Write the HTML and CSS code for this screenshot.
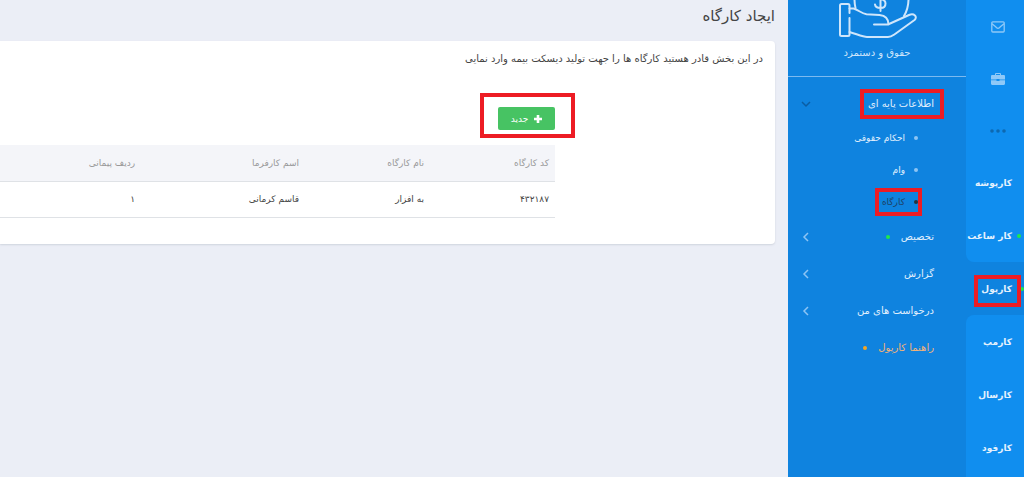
FILE: index.html
```html
<!doctype html>
<html lang="fa" dir="rtl">

	<head>
		<meta charset="UTF-8">
		<meta name="viewport" content="width=device-width, initial-scale=1">
		<title>ایجاد کارگاه</title>
		<link rel="stylesheet" href="styles.css">
	</head>

	<body>
		<nav class="rail">
			<div class="rail-group rail-top">
				<a class="rail-icon" href="#" aria-label="پیام ها">
					<svg width="14" height="12" viewBox="0 0 14 12" fill="none" stroke="currentColor" stroke-width="1.3">
						<rect x="0.8" y="0.8" width="12.4" height="10.2" rx="1" />
						<path d="M1 2.8c2 1.7 3.6 3 4.6 3.9.9.7 1.9.7 2.8 0 1-.9 2.6-2.2 4.6-3.9" />
					</svg>
				</a>
				<a class="rail-icon" href="#" aria-label="کیف">
					<svg width="14" height="12" viewBox="0 0 14 12" fill="currentColor">
						<path d="M4 2V1.2C4 .5 4.5 0 5.2 0h3.6C9.500 0 10 .5 10 1.2V2h2.800C13.500 2 14 2.500 14 3.200V6.500H8.500V6h-3v.5H0V3.200C0 2.500.5 2 1.200 2zM5 2h4V1H5zM0 7.200h5.500V8h3v-.8H14v3.600c0 .7-.5 1.200-1.200 1.200H1.200C.5 12 0 11.500 0 10.800z" />
					</svg>
				</a>
				<a class="rail-icon rail-more" href="#" aria-label="بیشتر">
					<svg width="16" height="4" viewBox="0 0 16 4" fill="currentColor">
						<circle cx="2" cy="2" r="1.8" />
						<circle cx="8" cy="2" r="1.8" />
						<circle cx="14" cy="2" r="1.8" />
					</svg>
				</a>
				<a class="rail-link" href="#">کارپوشه</a>
				<a class="rail-link has-dot" href="#">کار ساعت</a>
			</div>
			<a class="rail-link has-dot active" href="#"><span class="mark mark-rail">کارپول</span></a>
			<div class="rail-group rail-bottom">
				<a class="rail-link" href="#">کارمپ</a>
				<a class="rail-link" href="#">کارسال</a>
				<a class="rail-link" href="#">کارفود</a>
			</div>
		</nav>

		<aside class="sidebar">
			<div class="module">
				<svg width="80" height="40" viewBox="0 0 80 40" fill="none" stroke="currentColor" stroke-width="2" stroke-linecap="round" stroke-linejoin="round">
					<path d="M12.500 13V5.500c0-1-.5-1.500-1.500-1.500H4.500C3.500 4 3 4.500 3 5.500V34.500c0 1 .5 1.500 1.500 1.500H11c1 0 1.500-.5 1.500-1.500V18" />
					<path d="M12.500 8.500h4c5 1.500 8 5 13 5.700l13 .8c5 .5 9 3 9 9.500H37" />
					<path d="M52 24l20-9c5-2 9 1.500 5.500 5L57 34.700c-2 1.500-3 2.300-6 2.300H30c-4 0-11-3.200-17.500-5" />
					<path d="M17.500-1c0 3 .2 6 1 9M71.500-1c0 7-1.500 12-4.500 17" />
					<path d="M38 4.500c.5 3 2.500 3.500 5.500 3.500s5-1.500 5-4.500-2-4-5-4.500M43.500-1v12" />
				</svg>
				<div class="module-name">حقوق و دستمزد</div>
			</div>
			<ul class="menu">
				<li>
					<a class="menu-link open" href="#"><span class="mark mark-group">اطلاعات پایه ای</span>
						<svg class="arrow" width="10" height="10" viewBox="0 0 10 10" fill="none" stroke="currentColor" stroke-width="1.5"><path d="M1 3l4 4 4-4" /></svg>
					</a>
					<ul class="submenu">
						<li><a href="#">احکام حقوقی</a></li>
						<li><a href="#">وام</a></li>
						<li><a class="current mark mark-sub" href="#">کارگاه</a></li>
					</ul>
				</li>
				<li>
					<a class="menu-link" href="#">تخصیص<i class="dot green"></i>
						<svg class="arrow" width="10" height="10" viewBox="0 0 10 10" fill="none" stroke="currentColor" stroke-width="1.5"><path d="M7 1L3 5l4 4" /></svg>
					</a>
				</li>
				<li>
					<a class="menu-link" href="#">گزارش
						<svg class="arrow" width="10" height="10" viewBox="0 0 10 10" fill="none" stroke="currentColor" stroke-width="1.5"><path d="M7 1L3 5l4 4" /></svg>
					</a>
				</li>
				<li>
					<a class="menu-link" href="#">درخواست های من
						<svg class="arrow" width="10" height="10" viewBox="0 0 10 10" fill="none" stroke="currentColor" stroke-width="1.5"><path d="M7 1L3 5l4 4" /></svg>
					</a>
				</li>
				<li>
					<a class="menu-link help" href="#">راهنما کارپول<i class="dot orange"></i></a>
				</li>
			</ul>
		</aside>

		<main class="content">
			<h1>ایجاد کارگاه</h1>
			<section class="card">
				<p class="intro">در این بخش قادر هستید کارگاه ها را جهت تولید دیسکت بیمه وارد نمایی</p>
				<div class="list">
					<span class="mark mark-button">
						<button class="btn-new" type="button">
							<svg width="8" height="8" viewBox="0 0 8 8" fill="currentColor"><path d="M2.700 0h2.600v2.700H8v2.600H5.300V8H2.700V5.300H0V2.700h2.700z" /></svg>
							جدید
						</button>
					</span>
					<table>
						<thead>
							<tr>
								<th class="col-code">کد کارگاه</th>
								<th class="col-name">نام کارگاه</th>
								<th class="col-owner">اسم کارفرما</th>
								<th>ردیف پیمانی</th>
							</tr>
						</thead>
						<tbody>
							<tr>
								<td>۴۳۲۱۸۷</td>
								<td>به افزار</td>
								<td>قاسم کرمانی</td>
								<td>۱</td>
							</tr>
						</tbody>
					</table>
				</div>
			</section>
		</main>
	</body>

</html>
```
FILE: styles.css
```css
* {
	box-sizing: border-box;
}

body {
	margin: 0;
	min-height: 100vh;
	display: flex;
	background-color: #ebeef6;
	color: #444;
	font: 10px/16px "DejaVu Sans", sans-serif;
}

ul {
	margin: 0;
	padding: 0;
	list-style: none;
}

a {
	color: inherit;
	text-decoration: none;
}

/* right icon rail */
.rail {
	width: 58px;
	flex: none;
	display: flex;
	flex-direction: column;
	background-color: #0f83df;
	color: #e4f1fd;
	font-size: 9px;
}

.rail-group {
	background-color: #108eef;
}

.rail-top {
	border-bottom-left-radius: 8px;
}

.rail-bottom {
	flex: 1;
	border-top-left-radius: 8px;
}

.rail-icon {
	height: 52px;
	display: flex;
	align-items: center;
	justify-content: center;
	padding-top: 2px;
	padding-left: 6px;
	color: #8fc9f8;
}

.rail-more {
	color: #0d68b0;
}

.rail-link {
	height: 53px;
	display: flex;
	align-items: center;
	padding-right: 12px;
	position: relative;
	font-weight: bold;
	white-space: nowrap;
}

.has-dot::before {
	content: "";
	position: absolute;
	right: 3px;
	width: 4px;
	height: 4px;
	border-radius: 50%;
	background-color: #1fe84a;
}

.active.has-dot::before {
	right: 0;
}

/* sidebar */
.sidebar {
	width: 178px;
	flex: none;
	background-color: #0f83df;
	color: #e0effd;
}

.module {
	height: 77px;
	display: flex;
	flex-direction: column;
	align-items: center;
	border-bottom: 1px solid #7cbaf0;
	color: #cfe6fb;
}

.module svg {
	display: block;
}

.module-name {
	margin-top: 5px;
}

.menu {
	padding-top: 8px;
}

.menu-link {
	height: 37px;
	display: flex;
	align-items: center;
	padding: 0 32px 0 13px;
	white-space: nowrap;
}

.arrow {
	margin-right: auto;
	color: #8dc4f4;
}

.open .arrow {
	color: #0b5da2;
}

.dot {
	width: 4px;
	height: 4px;
	margin-right: 11px;
	border-radius: 50%;
}

.green {
	background-color: #1fe84a;
}

.orange {
	background-color: #f5a623;
}

.help {
	color: #f0b27a;
}

.submenu {
	font-size: 9px;
}

.submenu li {
	height: 32px;
	display: flex;
	align-items: center;
	padding-right: 48px;
}

.submenu a {
	display: flex;
	align-items: center;
}

.submenu a::before {
	content: "";
	width: 4px;
	height: 4px;
	margin-left: 9px;
	border-radius: 50%;
	background-color: #8dc4f4;
}

.submenu .current {
	color: #1d4265;
}

.submenu .current::before {
	background-color: #26323d;
}

/* red frames round the steps */
.mark {
	position: relative;
}

.mark::after {
	content: "";
	position: absolute;
	border: 4px solid #ed1c24;
	pointer-events: none;
}

.mark-rail::after {
	inset: -6px -9px -10px -7px;
}

.mark-group::after {
	inset: -7px -10px -7px -8px;
}

.mark-sub::after {
	inset: -6px -4px -6px -7px;
}

.mark-button::after {
	inset: -14px -20px -8px -18px;
}

/* page content */
.content {
	flex: 1;
	min-width: 0;
	padding-right: 13px;
}

h1 {
	margin: 0;
	padding: 4px 0 13px;
	font-size: 15px;
	line-height: 24px;
	font-weight: normal;
}

.card {
	padding: 10px 12px 26px 0;
	background-color: #fff;
	border-radius: 0 4px 4px 0;
	box-shadow: 0 1px 2px #cfd4de;
}

.intro {
	margin: 0;
}

.list {
	margin-right: 208px;
	padding-top: 40px;
}

.mark-button {
	display: inline-block;
	vertical-align: top;
}

.btn-new {
	height: 23px;
	min-width: 57px;
	display: flex;
	align-items: center;
	justify-content: center;
	gap: 6px;
	padding: 0 8px;
	border: 0;
	border-radius: 2px;
	background-color: #47c363;
	color: #fff;
	font: 9px/16px "DejaVu Sans", sans-serif;
}

table {
	width: 100%;
	margin-top: 15px;
	border-collapse: collapse;
	table-layout: fixed;
	font-size: 9px;
}

th,
td {
	height: 36px;
	padding: 0 6px;
	border-bottom: 1px solid #dfe2e6;
	text-align: right;
}

th {
	background-color: #f4f5f9;
	color: #999;
	font-weight: normal;
}

.col-code,
.col-name {
	width: 125px;
}

.col-owner {
	width: 164px;
}
```
